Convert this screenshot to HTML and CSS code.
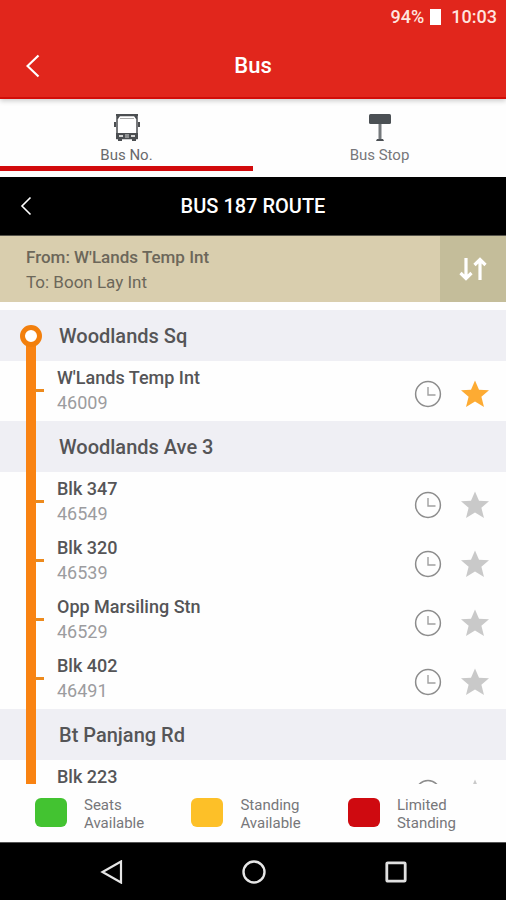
FILE: index.html
```html
<!DOCTYPE html>
<html lang="en">
<head>
<meta charset="utf-8">
<meta name="viewport" content="width=device-width, initial-scale=1">
<title>Bus 187 Route</title>
<link rel="stylesheet" href="styles.css">
</head>
<body>
<svg class="defs" aria-hidden="true">
  <symbol id="clock" viewBox="0 0 28 28"><circle cx="14" cy="14" r="12.4" fill="none" stroke="#8c8c8c" stroke-width="1.5"/><path d="M14 7v8h7.500" fill="none" stroke="#a0a0a0" stroke-width="1.4"/></symbol>
  <symbol id="star" viewBox="0 0 28 28"><path d="M14 .5l4 9.300 10 .5-7.600 6.500 2.600 10.200-9-5.500L5 27l2.600-10.200L0 10.300l10-.5z" fill="currentColor"/></symbol>
</svg>
<div class="screen">
  <header class="top">
    <div class="status"><span>94%</span><i class="battery"></i><time>10:03</time></div>
    <div class="bar title-bar">
      <button class="back" aria-label="Back"><svg width="14" height="24" viewBox="0 0 14 24"><path d="M12.500 1.500L1.500 12l11 10.500" fill="none" stroke="#fff" stroke-width="2.200"/></svg></button>
      <h1>Bus</h1>
    </div>
  </header>
  <nav class="tabs">
    <a class="tab active" href="#no">
      <svg width="28" height="28" viewBox="0 0 28 28"><path d="M4 1.500h20v23H4z" fill="#fff" stroke="#4b4e51" stroke-width="1.500"/><path d="M3 0h22v2H3zM4 2h3L5 5H4zM21 2h3v3h-1zM3 19h22v6H3zM5 25h4v2H5zM19 25h4v2h-4zM1 8h2v5H1zM25 8h2v5h-2z" fill="#4b4e51"/><path d="M7 4h14v1H7z" fill="#aaa"/><path d="M6 21h4v2H6zM18 21h4v2h-4zM12 20.500h4v1h-4zM12 22.500h4v1h-4z" fill="#d4d4d4"/></svg>
      <span>Bus No.</span>
    </a>
    <a class="tab" href="#stop">
      <svg width="28" height="28" viewBox="0 0 28 28"><rect x="3" y="0" width="22" height="10" rx="1.500" fill="#4b5054"/><path d="M12.500 10h3v15h-3z" fill="#75797c"/><path d="M11 25h6l1 2h-8z" fill="#4b5054"/></svg>
      <span>Bus Stop</span>
    </a>
  </nav>
  <div class="bar route-bar">
    <button class="back" aria-label="Back to bus list"><svg width="12" height="20" viewBox="0 0 12 20"><path d="M10.500 1.500L2 10l8.500 8.500" fill="none" stroke="#fff" stroke-width="1.600"/></svg></button>
    <h2>BUS 187 ROUTE</h2>
  </div>
  <div class="direction">
    <div class="ends"><p class="from">From: W'Lands Temp Int</p><p>To: Boon Lay Int</p></div>
    <button class="swap" aria-label="Swap direction"><svg width="30" height="26" viewBox="0 0 30 26"><path d="M8 2v20M2.500 17L8 22.500l5.500-5.500M22 24V4M16.500 9L22 3.500 27.500 9" fill="none" stroke="#fff" stroke-width="3.200"/></svg></button>
  </div>
  <main class="viewport">
    <div class="route">
      <h3>Woodlands Sq</h3>
      <ul>
        <li><div class="stop"><p>W'Lands Temp Int</p><p class="code">46009</p></div><button aria-label="Arrivals"><svg><use href="#clock"/></svg></button><button class="fav on" aria-label="Favourite"><svg><use href="#star"/></svg></button></li>
      </ul>
      <h3>Woodlands Ave 3</h3>
      <ul>
        <li><div class="stop"><p>Blk 347</p><p class="code">46549</p></div><button aria-label="Arrivals"><svg><use href="#clock"/></svg></button><button class="fav" aria-label="Favourite"><svg><use href="#star"/></svg></button></li>
        <li><div class="stop"><p>Blk 320</p><p class="code">46539</p></div><button aria-label="Arrivals"><svg><use href="#clock"/></svg></button><button class="fav" aria-label="Favourite"><svg><use href="#star"/></svg></button></li>
        <li><div class="stop"><p>Opp Marsiling Stn</p><p class="code">46529</p></div><button aria-label="Arrivals"><svg><use href="#clock"/></svg></button><button class="fav" aria-label="Favourite"><svg><use href="#star"/></svg></button></li>
        <li><div class="stop"><p>Blk 402</p><p class="code">46491</p></div><button aria-label="Arrivals"><svg><use href="#clock"/></svg></button><button class="fav" aria-label="Favourite"><svg><use href="#star"/></svg></button></li>
      </ul>
      <h3>Bt Panjang Rd</h3>
      <ul>
        <li><div class="stop"><p>Blk 223</p></div><button aria-label="Arrivals"><svg><use href="#clock"/></svg></button><button class="fav" aria-label="Favourite"><svg><use href="#star"/></svg></button></li>
      </ul>
    </div>
  </main>
  <ul class="legend">
    <li><i class="green"></i><span>Seats<br>Available</span></li>
    <li><i class="amber"></i><span>Standing<br>Available</span></li>
    <li><i class="red"></i><span>Limited<br>Standing</span></li>
  </ul>
  <footer class="system">
    <button aria-label="System back"><svg width="24" height="24" viewBox="0 0 24 24"><path d="M21 1.500v21L2.500 12z" fill="none" stroke="#e6e6e6" stroke-width="2.200"/></svg></button>
    <button aria-label="Home"><svg width="24" height="24" viewBox="0 0 24 24"><circle cx="12" cy="12" r="10.500" fill="none" stroke="#e6e6e6" stroke-width="2.400"/></svg></button>
    <button aria-label="Recent apps"><svg width="24" height="24" viewBox="0 0 24 24"><rect x="2.800" y="2.800" width="18.400" height="18.400" rx="1" fill="none" stroke="#e0e0e0" stroke-width="2.800"/></svg></button>
  </footer>
</div>
</body>
</html>
```

FILE: styles.css
```css
*, *::before, *::after { box-sizing: border-box; margin: 0; padding: 0; }
body { font-family: Roboto, "Liberation Sans", sans-serif; color: #555557; background: #fefefe; }
ul { list-style: none; }
button { border: 0; background: none; font: inherit; color: inherit; display: flex; align-items: center; justify-content: center; }
svg { display: block; }
.defs { position: absolute; width: 0; height: 0; }
.screen { display: flex; flex-direction: column; height: 100vh; }

.top { background: #e1261c; color: #fff; border-bottom: 2px solid #d20d08; box-shadow: 0 2px 5px #0003; z-index: 1; }
.status { display: flex; justify-content: flex-end; align-items: center; height: 33px; padding-right: 9px; font-size: 18px; font-weight: 500; color: #ffe4df; }
.battery { width: 11px; height: 16px; margin: 0 10px 0 6px; background: #fff; }
.bar { display: grid; grid-template-columns: 64px 1fr 64px; align-items: center; text-align: center; color: #fff; }
.title-bar { height: 64px; padding-top: 2px; }
.title-bar .back svg { margin-left: 2px; }
h1 { font-size: 22px; font-weight: 500; line-height: 26px; }
h2 { font-size: 20px; font-weight: 500; line-height: 24px; }

.tabs { display: flex; height: 78px; }
.tab { flex: 1; display: flex; flex-direction: column; align-items: center; gap: 4px; height: 72px; padding-top: 15px; border-bottom: 5px solid transparent; color: #77777a; font-size: 15px; line-height: 18px; text-decoration: none; }
.active { border-color: #d20a0c; color: #69696c; }

.route-bar { height: 59px; background: #000; border-bottom: 1px solid #55534a; }
.route-bar .back { padding-right: 12px; }
.direction { display: flex; height: 66px; background: #d9ceae; }
.ends { flex: 1; padding: 9px 26px; font-size: 17px; line-height: 25px; color: #6c675a; }
.from { font-weight: 500; }
.swap { width: 66px; background: #c4bd9a; }

.viewport { flex: 1; min-height: 0; margin-top: 8px; overflow: hidden; }
.route { position: relative; }
.route::before { content: ""; position: absolute; left: 26px; top: 26px; bottom: 0; width: 10px; background: #f98312; }
.route::after { content: ""; position: absolute; left: 20px; top: 15px; width: 22px; height: 22px; border: 5px solid #f27f0c; border-radius: 50%; background: #fff; }
h3 { height: 51px; padding: 1px 0 0 59px; background: #efeff4; font-size: 20px; font-weight: 500; line-height: 50px; }
.route ul { padding-bottom: 1px; }
.route li { position: relative; display: flex; height: 59px; padding: 6px 17px 0 57px; }
.route li::before { content: ""; position: absolute; left: 35px; top: 28px; width: 9px; height: 3px; background: #ed8a1d; }
.stop { flex: 1; display: flex; flex-direction: column; gap: 11px; font-size: 18px; line-height: 14px; font-weight: 500; padding-top: 4px; }
.code { font-weight: 400; color: #9c9c9f; }
.route li button { width: 28px; height: 28px; margin: 13px 0 0 19px; }
.route li svg { width: 28px; height: 28px; }
.fav { color: #c9c9c9; }
.on { color: #fdab33; }

.legend { display: flex; justify-content: space-between; height: 58px; padding: 12px 50px 0 35px; font-size: 15px; line-height: 18px; color: #77777a; }
.legend li { display: flex; gap: 17px; }
.legend i { width: 32px; height: 29px; margin-top: 2px; border-radius: 6px; }
.green { background: #43c331; }
.amber { background: #fdc028; }
.red { background: #cf0a10; }
.system { display: flex; justify-content: center; gap: 118px; height: 58px; padding-left: 1px; background: #000; border-top: 1px solid #555; }
```
